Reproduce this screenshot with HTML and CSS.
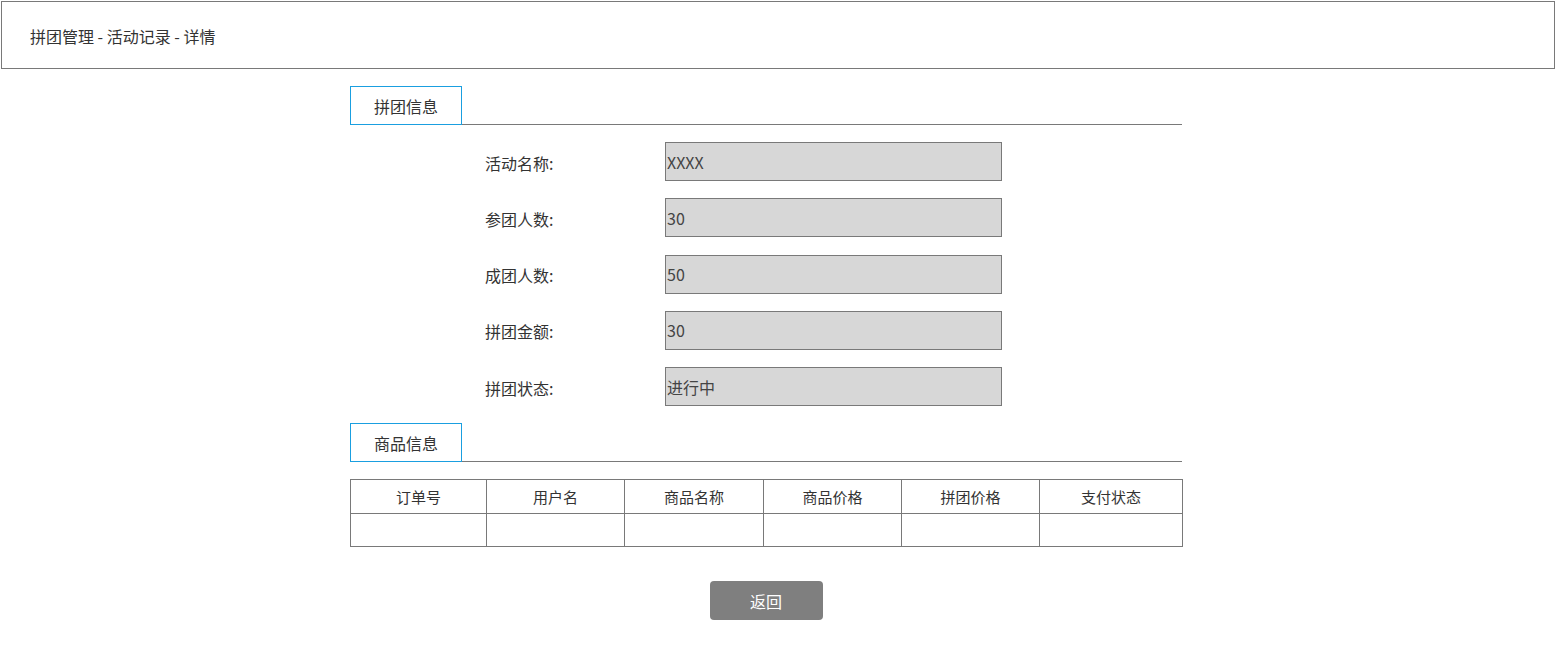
FILE: index.html
```html
<!DOCTYPE html>
<html lang="zh-CN">
<head>
<meta charset="utf-8">
<title>拼团管理 - 活动记录 - 详情</title>
<link rel="stylesheet" href="styles.css">
</head>
<body>
<header class="topbar">拼团管理 - 活动记录 - 详情</header>
<main class="content">
  <div class="tabs"><div class="tab">拼团信息</div></div>
  <div class="form">
    <div class="row"><span class="label">活动名称:</span><div class="field">XXXX</div></div>
    <div class="row"><span class="label">参团人数:</span><div class="field">30</div></div>
    <div class="row"><span class="label">成团人数:</span><div class="field">50</div></div>
    <div class="row"><span class="label">拼团金额:</span><div class="field">30</div></div>
    <div class="row"><span class="label">拼团状态:</span><div class="field">进行中</div></div>
  </div>
  <div class="tabs"><div class="tab">商品信息</div></div>
  <table class="grid">
    <colgroup>
      <col class="c1"><col class="c2"><col class="c3"><col class="c4"><col class="c5"><col class="c6">
    </colgroup>
    <thead>
      <tr><th>订单号</th><th>用户名</th><th>商品名称</th><th>商品价格</th><th>拼团价格</th><th>支付状态</th></tr>
    </thead>
    <tbody>
      <tr><td></td><td></td><td></td><td></td><td></td><td></td></tr>
    </tbody>
  </table>
  <div class="actions"><button class="btn" type="button">返回</button></div>
</main>
</body>
</html>
```

FILE: styles.css
```css
* { box-sizing: border-box; }
body {
  margin: 0;
  background: #fff;
  font-family: "Noto Sans CJK SC", "Noto Sans", sans-serif;
  font-size: 16px;
  color: #333;
}
.topbar {
  margin: 1px 0 0 1px;
  width: 1554px;
  height: 68px;
  border: 1px solid #797979;
  display: flex;
  align-items: center;
  padding-left: 28px;
  padding-top: 1px;
  color: #333;
}
.content {
  width: 832px;
  margin: 17px 0 0 350px;
  display: flex;
  flex-direction: column;
}
.tabs {
  display: flex;
  border-bottom: 1px solid #797979;
  height: 39px;
}
.tab {
  width: 112px;
  height: 39px;
  border: 1px solid #1a9fe0;
  display: flex;
  align-items: center;
  justify-content: center;
  color: #333;
  background: #fff;
}
.form {
  display: flex;
  flex-direction: column;
  gap: 17.25px;
  padding: 17px 0 17px 135px;
}
.row {
  display: flex;
  align-items: center;
  height: 39px;
}
.label {
  width: 180px;
  padding-top: 2px;
  color: #333;
}
.field {
  width: 337px;
  height: 39px;
  background: #d7d7d7;
  border: 1px solid #797979;
  display: flex;
  align-items: center;
  padding-left: 1px;
  color: #444;
}
.grid {
  margin-top: 17px;
  width: 832px;
  border-collapse: collapse;
  table-layout: fixed;
}
.c1 { width: 136px; }
.c2 { width: 138px; }
.c3 { width: 139px; }
.c4 { width: 138px; }
.c5 { width: 138px; }
.c6 { width: 143px; }
.grid th, .grid td {
  border: 1px solid #797979;
  text-align: center;
  font-weight: normal;
  font-size: 15px;
  color: #333;
  padding: 0;
}
.grid th { height: 34px; }
.grid td { height: 33px; }
.actions {
  display: flex;
  justify-content: center;
  margin-top: 34px;
}
.btn {
  width: 113px;
  height: 39px;
  border: none;
  border-radius: 4px;
  background: #7f7f7f;
  color: #fff;
  font-family: "Noto Sans CJK SC", "Noto Sans", sans-serif;
  font-size: 16px;
  padding: 0;
}
```
